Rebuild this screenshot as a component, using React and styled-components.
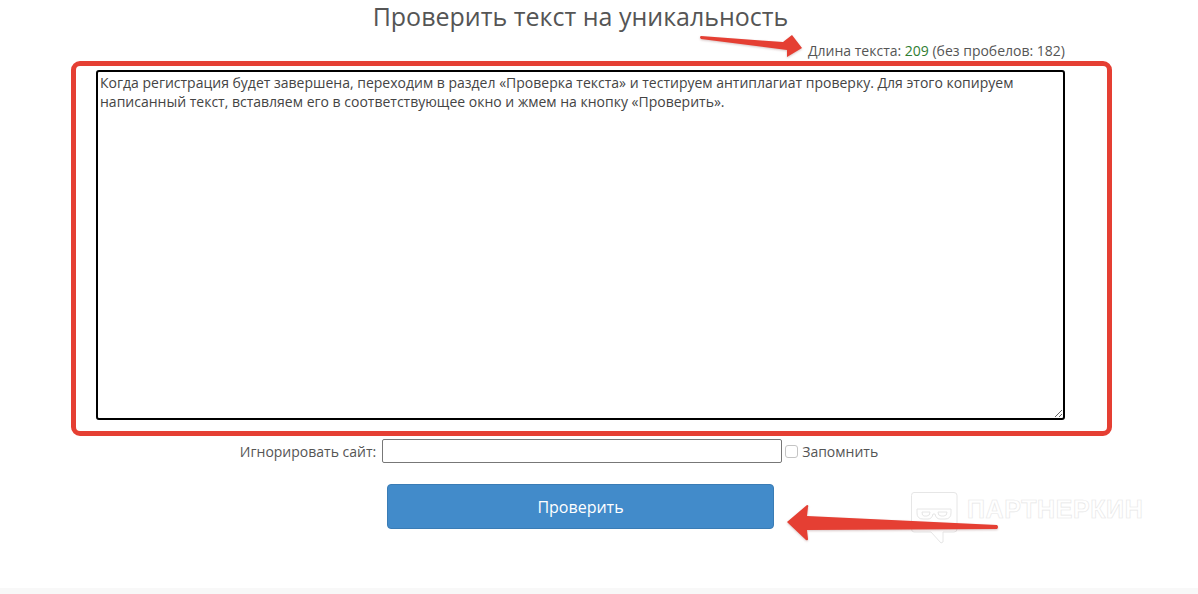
import React from "react"
import styled, { createGlobalStyle } from "styled-components"

const text =
  "Когда регистрация будет завершена, переходим в раздел «Проверка текста» и тестируем антиплагиат проверку. Для этого копируем написанный текст, вставляем его в соответствующее окно и жмем на кнопку «Проверить»."

const GlobalStyle = createGlobalStyle`
  html, body {
    margin: 0;
    padding: 0;
    background: #fff;
    overflow: hidden;
  }
  body {
    font-family: "Open Sans", "Liberation Sans", sans-serif;
    color: #555;
  }
`

const Page = styled.div`
  position: relative;
  width: 1198px;
  height: 594px;
  display: flex;
  flex-direction: column;
`
const Main = styled.main`
  width: 1161px;
  flex: 1;
  display: flex;
  flex-direction: column;
  align-items: center;
`
const Title = styled.h1`
  margin: 0;
  height: 36px;
  font-size: 25px;
  line-height: 33px;
  font-weight: 400;
  color: #555;
`
const Stats = styled.div`
  align-self: flex-end;
  margin: 6px 96px 0 0;
  height: 18px;
  font-size: 14px;
  line-height: 18px;
  color: #555;
`
const Count = styled.span`
  color: #2f7d32;
`
const Editor = styled.textarea`
  display: block;
  box-sizing: border-box;
  width: 969px;
  height: 350px;
  margin-top: 10px;
  padding: 1px 2px;
  border: 2px solid #000;
  border-radius: 3px;
  outline: none;
  font-family: "Open Sans", "Liberation Sans", sans-serif;
  font-size: 14px;
  line-height: 19px;
  color: #444;
  background: #fff;
`
const IgnoreRow = styled.div`
  display: flex;
  align-items: center;
  height: 24px;
  margin: 19px 43px 0 0;
  font-size: 14px;
  color: #555;
`
const IgnoreLabel = styled.label`
  margin-right: 6px;
`
const IgnoreInput = styled.input`
  box-sizing: border-box;
  width: 400px;
  height: 24px;
  padding: 0 4px;
  border: 1px solid #777;
  border-radius: 2px;
  outline: none;
`
const RememberBox = styled.span`
  box-sizing: border-box;
  width: 13px;
  height: 13px;
  margin: 1px 4px 0 3px;
  border: 1px solid #c4c4c4;
  border-radius: 3px;
  background: #fff;
`
const SubmitButton = styled.button`
  box-sizing: border-box;
  width: 387px;
  height: 45px;
  margin-top: 21px;
  border: 1px solid #3a7cb5;
  border-radius: 4px;
  background: #428bca;
  color: #fff;
  font-family: "Open Sans", "Liberation Sans", sans-serif;
  font-size: 16px;
  font-weight: 400;
`
const Footer = styled.footer`
  height: 6px;
  background: #f8f8f8;
`
const HighlightFrame = styled.div`
  position: absolute;
  left: 71px;
  top: 61px;
  box-sizing: border-box;
  width: 1041px;
  height: 375px;
  border: 5px solid #e53f33;
  border-radius: 9px;
  pointer-events: none;
`
const Watermark = styled.div`
  position: absolute;
  left: 910px;
  top: 491px;
  display: flex;
  align-items: flex-start;
  gap: 9px;
`
const WatermarkText = styled.span`
  margin-top: 4px;
  font-family: "Liberation Sans", Arial, sans-serif;
  font-size: 25px;
  font-weight: 700;
  line-height: 29px;
  letter-spacing: 0.6px;
  color: #fff;
  -webkit-text-stroke: 0.6px #e6e6e6;
`
const Arrow = styled.svg`
  position: absolute;
  left: ${p => p.$left}px;
  top: ${p => p.$top}px;
  filter: drop-shadow(0 1px 1px rgba(120, 60, 60, 0.3));
`

export default () => (
  <Page>
    <GlobalStyle />
    <Main>
      <Title>Проверить текст на уникальность</Title>
      <Stats>
        Длина текста: <Count>209</Count> (без пробелов: 182)
      </Stats>
      <Editor defaultValue={text} spellCheck={false} />
      <IgnoreRow>
        <IgnoreLabel>Игнорировать сайт:</IgnoreLabel>
        <IgnoreInput type="text" />
        <RememberBox />
        Запомнить
      </IgnoreRow>
      <SubmitButton>Проверить</SubmitButton>
    </Main>
    <Footer />

    <Watermark>
      <svg width="48" height="53" viewBox="0 0 48 53" fill="none" stroke="#e6e6e6" strokeWidth="1">
        <path d="M4 1.5H44Q47 1.5 47 4.5V38Q47 41 44 41H33V51L31 52L21 41H4Q1.5 41 1.5 38V4.5Q1.5 1.5 4 1.5Z" />
        <path d="M7 18H41V22Q41 28 35 28H30Q26 28 25 23H23Q22 28 18 28H13Q7 28 7 22Z" />
        <path d="M12 21H20Q20 25 17 25H14Q12 25 12 21ZM28 21H37Q37 25 34 25H31Q28 25 28 21Z" />
      </svg>
      <WatermarkText>ПАРТНЕРКИН</WatermarkText>
    </Watermark>

    <HighlightFrame />

    <Arrow $left={698} $top={32} width="108" height="28" viewBox="0 0 108 28">
      <path
        d="M3 4L85 10L94 3L104 16L89 25L89 18L3 7Q1 5 3 4Z"
        fill="#e53f33"
      />
    </Arrow>
    <Arrow $left={784} $top={502} width="218" height="42" viewBox="0 0 218 42">
      <path
        d="M3 20L23 3Q25 3 24 5L23 14L213 23Q215 25 213 27L23 28L24 37Q24 39 22 38Z"
        fill="#e53f33"
      />
    </Arrow>
  </Page>
)
